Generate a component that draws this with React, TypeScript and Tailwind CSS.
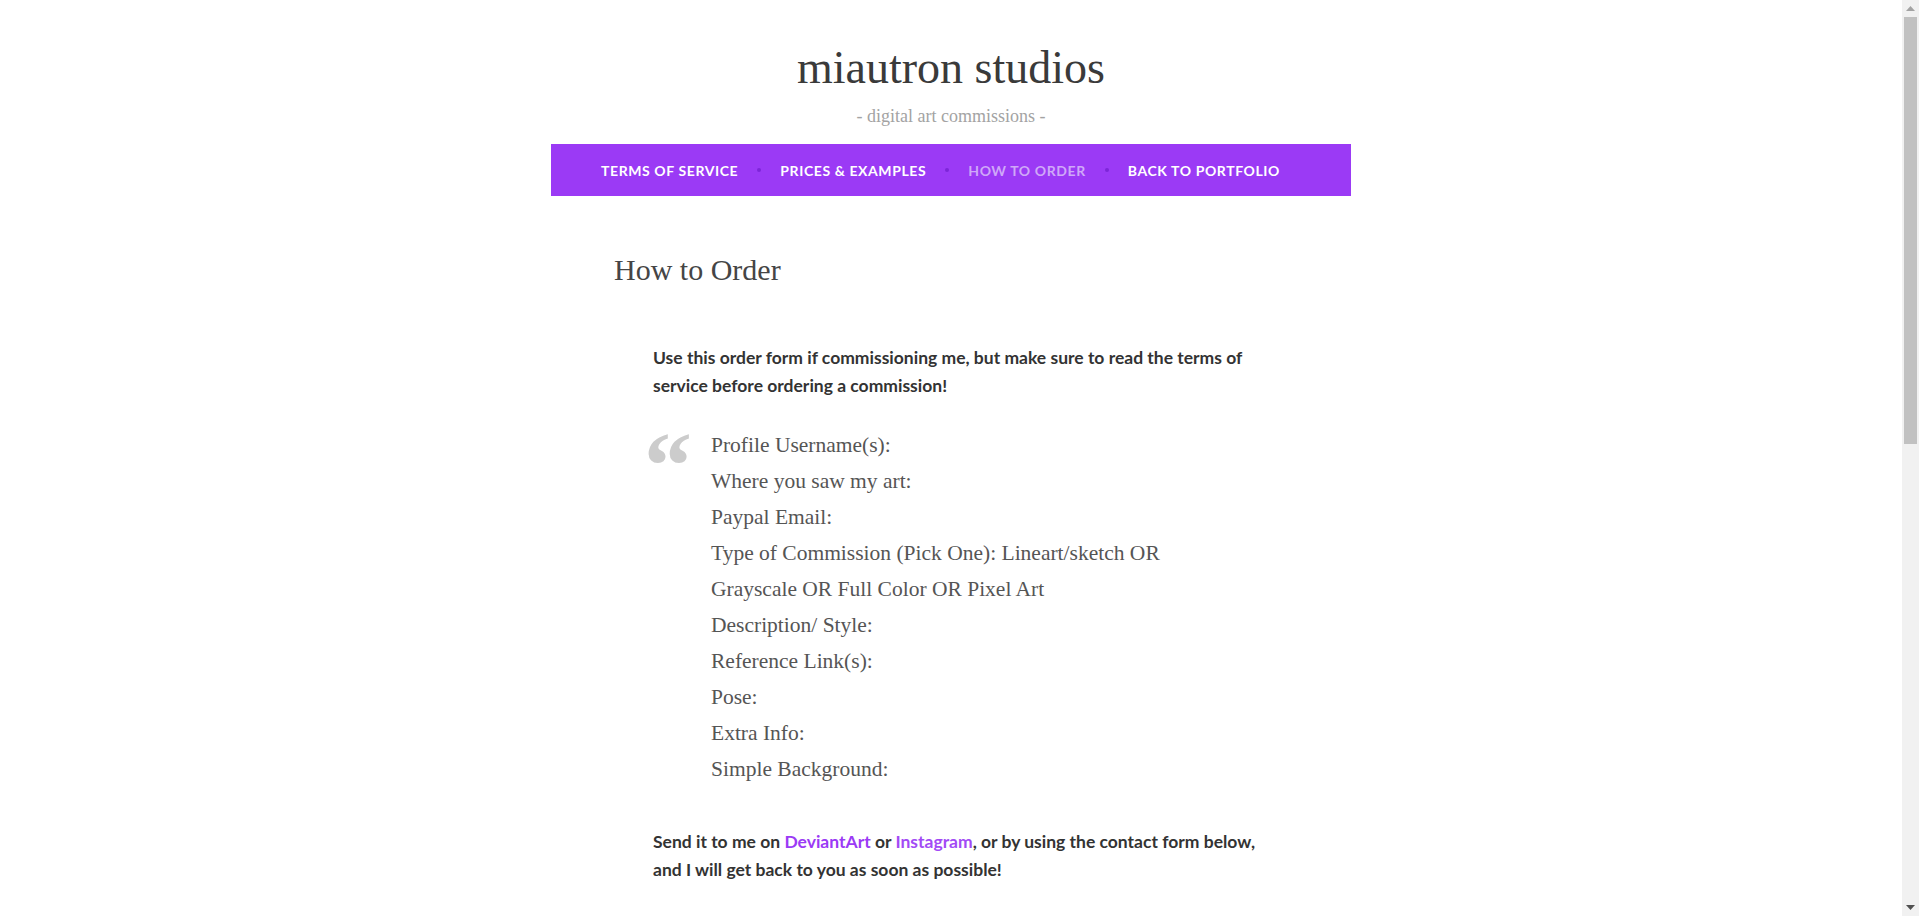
import React from "react";

const navItems = [
  { label: "Terms of Service", active: false },
  { label: "Prices & Examples", active: false },
  { label: "How to Order", active: true },
  { label: "Back to Portfolio", active: false },
];

const formLines = [
  "Profile Username(s):",
  "Where you saw my art:",
  "Paypal Email:",
  "Type of Commission (Pick One): Lineart/sketch OR Grayscale OR Full Color OR Pixel Art",
  "Description/ Style:",
  "Reference Link(s):",
  "Pose:",
  "Extra Info:",
  "Simple Background:",
];

function Scrollbar() {
  return (
    <div className="flex h-screen w-[17px] shrink-0 flex-col bg-[#f1f1f1]">
      <div className="flex h-[17px] items-center justify-center">
        <svg width="9" height="5" viewBox="0 0 9 5">
          <path d="M0 5 L4.5 0 L9 5 Z" fill="#a3a3a3" />
        </svg>
      </div>
      <div className="mx-[2px] h-[427px] bg-[#c1c1c1]" />
      <div className="flex-1" />
      <div className="flex h-[17px] items-center justify-center">
        <svg width="9" height="5" viewBox="0 0 9 5">
          <path d="M0 0 L9 0 L4.5 5 Z" fill="#505050" />
        </svg>
      </div>
    </div>
  );
}

export default function App() {
  return (
    <div className="flex h-screen overflow-hidden bg-white">
      <div className="min-w-0 flex-1 overflow-hidden">
        <header className="pt-[42px] text-center">
          <h1 className="font-['Liberation_Serif',serif] text-[46px] leading-[52px] text-[#3a3a3a]">
            miautron studios
          </h1>
          <p className="mt-[10px] font-['Liberation_Serif',serif] text-[18px] leading-[24px] text-[#a3a3a3]">
            - digital art commissions -
          </p>
        </header>

        <nav className="mx-auto mt-[16px] flex h-[52px] w-[800px] items-center bg-[#9b3af5] pl-[50px]">
          {navItems.map((item, i) => (
            <div key={item.label} className="flex items-center">
              {i > 0 && (
                <span className="mx-[19px] h-[4px] w-[4px] rounded-full bg-[#7d25d8]" />
              )}
              <a
                href="#"
                className={
                  item.active
                    ? "font-['Lato',sans-serif] text-[14px] font-bold uppercase tracking-[0.6px] text-[#cfa8f8]"
                    : "font-['Lato',sans-serif] text-[14px] font-bold uppercase tracking-[0.6px] text-white"
                }
              >
                {item.label}
              </a>
            </div>
          ))}
        </nav>

        <main className="mx-auto w-[800px]">
          <h2 className="ml-[63px] mt-[56px] font-['Liberation_Serif',serif] text-[30px] leading-[36px] text-[#454545]">
            How to Order
          </h2>

          <div className="ml-[102px] mt-[56px] w-[605px] font-['Lato',sans-serif] text-[17.5px] font-bold leading-[28px] text-[#333]">
            <p>
              Use this order form if commissioning me, but make sure to read
              the terms of service before ordering a commission!
            </p>

            <blockquote className="mt-[27px] flex">
              <span className="-ml-[9px] w-[67px] shrink-0 font-['Liberation_Serif',serif] text-[96px] font-bold leading-[78px] text-[#cccccc]">
                &ldquo;
              </span>
              <div className="w-[490px] font-['Liberation_Serif',serif] text-[21.5px] font-normal leading-[36px] text-[#555]">
                {formLines.map((line) => (
                  <p key={line}>{line}</p>
                ))}
              </div>
            </blockquote>

            <p className="mt-[41px]">
              Send it to me on{" "}
              <a href="#" className="text-[#9b3af5]">
                DeviantArt
              </a>{" "}
              or{" "}
              <a href="#" className="text-[#a24af5]">
                Instagram
              </a>
              , or by using the contact form below, and I will get back to you
              as soon as possible!
            </p>
          </div>
        </main>
      </div>
      <Scrollbar />
    </div>
  );
}
